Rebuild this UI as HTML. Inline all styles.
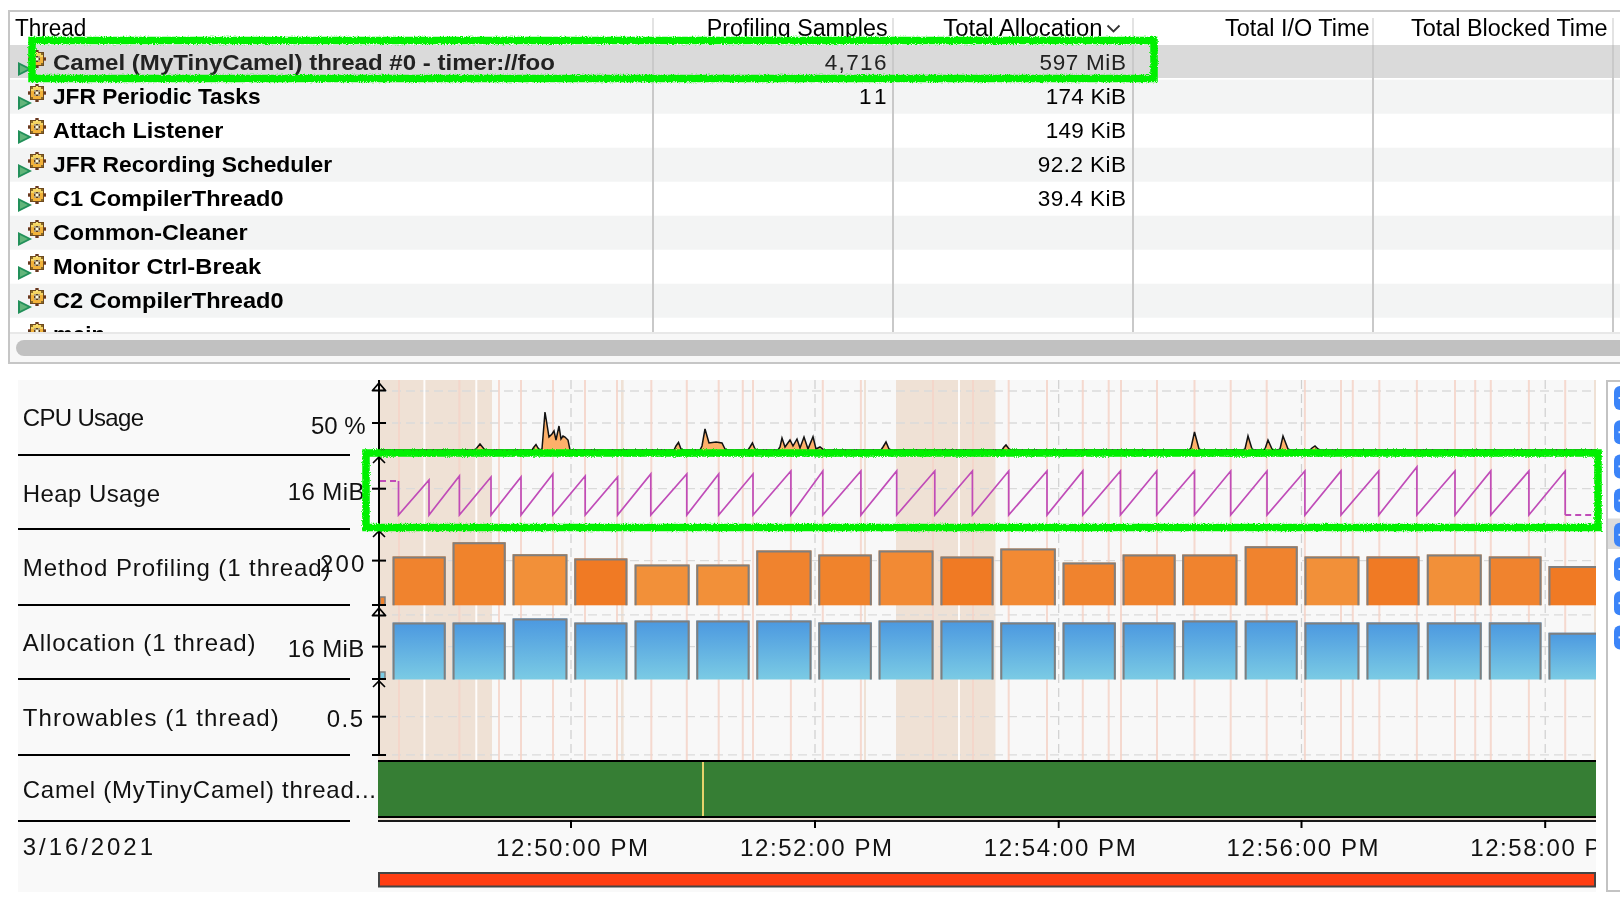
<!DOCTYPE html><html><head><meta charset="utf-8"><style>html,body{margin:0;padding:0;width:1620px;height:904px;overflow:hidden;background:#fff}</style></head><body><svg width="1620" height="904" viewBox="0 0 1620 904" style="position:absolute;left:0;top:0;will-change:transform;font-family:'Liberation Sans',sans-serif">
<rect x="0" y="0" width="1620" height="904" fill="#ffffff"/>
<rect x="9" y="11" width="1620" height="352" fill="#ffffff" stroke="#c6c6c6" stroke-width="2"/>
<rect x="10" y="45" width="1610" height="33" fill="#dadada"/>
<rect x="10" y="79.7" width="1610" height="34" fill="#f3f4f4"/>
<rect x="10" y="147.7" width="1610" height="34" fill="#f3f4f4"/>
<rect x="10" y="215.7" width="1610" height="34" fill="#f3f4f4"/>
<rect x="10" y="283.7" width="1610" height="34" fill="#f3f4f4"/>
<rect x="652" y="18" width="2" height="27" fill="#e3e3e3"/>
<rect x="652" y="45" width="2" height="287" fill="#c9c9c9"/>
<rect x="892" y="18" width="2" height="27" fill="#e3e3e3"/>
<rect x="892" y="45" width="2" height="287" fill="#c9c9c9"/>
<rect x="1132" y="18" width="2" height="27" fill="#e3e3e3"/>
<rect x="1132" y="45" width="2" height="287" fill="#c9c9c9"/>
<rect x="1372" y="18" width="2" height="27" fill="#e3e3e3"/>
<rect x="1372" y="45" width="2" height="287" fill="#c9c9c9"/>
<rect x="1612" y="18" width="2" height="27" fill="#e3e3e3"/>
<rect x="1612" y="45" width="2" height="287" fill="#c9c9c9"/>
<text x="15.0" y="36.0" font-size="23" font-weight="normal" fill="#000" textLength="71.4" lengthAdjust="spacingAndGlyphs">Thread</text>
<text x="706.7" y="36.0" font-size="23" font-weight="normal" fill="#000" textLength="180.9" lengthAdjust="spacingAndGlyphs">Profiling Samples</text>
<text x="943.2" y="36.0" font-size="23" font-weight="normal" fill="#000" textLength="159.3" lengthAdjust="spacingAndGlyphs">Total Allocation</text>
<polyline points="1107.5,25.5 1113.5,31.5 1119.5,25.5" fill="none" stroke="#333" stroke-width="1.8"/>
<text x="1225.0" y="36.0" font-size="23" font-weight="normal" fill="#000" textLength="144.4" lengthAdjust="spacingAndGlyphs">Total I/O Time</text>
<text x="1411.0" y="36.0" font-size="23" font-weight="normal" fill="#000" textLength="196.6" lengthAdjust="spacingAndGlyphs">Total Blocked Time</text>
<defs>
<clipPath id="tblclip"><rect x="10" y="12" width="1610" height="320"/></clipPath>
<g id="gear">
<path d="M7 0h4v2h-4z M0 7h2v4h-2z M16 7h2v4h-2z M7 16h4v2h-4z" fill="#a5705c"/>
<path d="M8 0h2v2h-2z M0 8h2v2h-2z M16 8h2v2h-2z M8 16h2v2h-2z" fill="#5e3a22"/>
<rect x="2" y="2" width="14" height="14" fill="#6e4a1e"/>
<rect x="3" y="3" width="12" height="12" fill="#f2b23a"/>
<path d="M3 3h12v4h-12z" fill="#f5d462"/>
<path d="M8 2h2v2h-2z" fill="#f7e27a"/>
<path d="M3 3h2v2h-2z M13 3h2v2h-2z M3 13h2v2h-2z M13 13h2v2h-2z" fill="#8a6a2a"/>
<rect x="6" y="6" width="6" height="6" fill="#b0a27e"/>
<path d="M8 6h2v1h-2z M6 8h1v2h-1z M11 8h1v2h-1z M8 11h2v1h-2z" fill="#5a3a20"/>
<rect x="8" y="8" width="2" height="2" fill="#fffbe8"/>
</g>
<g id="tri">
<path d="M0 0 L14 7 L0 14 Z" fill="#22905a"/>
<path d="M2 3 L10 7 L2 11 Z" fill="#62b57a"/>
</g>
<linearGradient id="blue" x1="0" y1="0" x2="0" y2="1"><stop offset="0" stop-color="#4b98e0"/><stop offset="1" stop-color="#7bcbe4"/></linearGradient>
</defs>
<g clip-path="url(#tblclip)">
<use href="#tri" x="18" y="62.0"/>
<use href="#gear" x="28" y="50.0"/>
<text x="53.0" y="70.0" font-size="22" font-weight="bold" fill="#222" textLength="502.0" lengthAdjust="spacingAndGlyphs">Camel (MyTinyCamel) thread #0 - timer://foo</text>
<text x="824.7" y="70.0" font-size="22.5" font-weight="normal" fill="#222" textLength="61.7" lengthAdjust="spacing">4,716</text>
<text x="1039.5" y="70.0" font-size="22.5" font-weight="normal" fill="#222" textLength="86.5" lengthAdjust="spacing">597 MiB</text>
<use href="#tri" x="18" y="96.0"/>
<use href="#gear" x="28" y="84.0"/>
<text x="53.0" y="104.0" font-size="22" font-weight="bold" fill="#000" textLength="207.5" lengthAdjust="spacingAndGlyphs">JFR Periodic Tasks</text>
<text x="859.0" y="104.0" font-size="22.5" font-weight="normal" fill="#000" textLength="27.4" lengthAdjust="spacing">11</text>
<text x="1045.7" y="104.0" font-size="22.5" font-weight="normal" fill="#000" textLength="80.3" lengthAdjust="spacing">174 KiB</text>
<use href="#tri" x="18" y="130.0"/>
<use href="#gear" x="28" y="118.0"/>
<text x="53.0" y="138.0" font-size="22" font-weight="bold" fill="#000" textLength="170.5" lengthAdjust="spacingAndGlyphs">Attach Listener</text>
<text x="1045.7" y="138.0" font-size="22.5" font-weight="normal" fill="#000" textLength="80.3" lengthAdjust="spacing">149 KiB</text>
<use href="#tri" x="18" y="164.0"/>
<use href="#gear" x="28" y="152.0"/>
<text x="53.0" y="172.0" font-size="22" font-weight="bold" fill="#000" textLength="279.2" lengthAdjust="spacingAndGlyphs">JFR Recording Scheduler</text>
<text x="1037.8" y="172.0" font-size="22.5" font-weight="normal" fill="#000" textLength="88.2" lengthAdjust="spacing">92.2 KiB</text>
<use href="#tri" x="18" y="198.0"/>
<use href="#gear" x="28" y="186.0"/>
<text x="53.0" y="206.0" font-size="22" font-weight="bold" fill="#000" textLength="230.5" lengthAdjust="spacingAndGlyphs">C1 CompilerThread0</text>
<text x="1037.8" y="206.0" font-size="22.5" font-weight="normal" fill="#000" textLength="88.2" lengthAdjust="spacing">39.4 KiB</text>
<use href="#tri" x="18" y="232.0"/>
<use href="#gear" x="28" y="220.0"/>
<text x="53.0" y="240.0" font-size="22" font-weight="bold" fill="#000" textLength="194.7" lengthAdjust="spacingAndGlyphs">Common-Cleaner</text>
<use href="#tri" x="18" y="266.0"/>
<use href="#gear" x="28" y="254.0"/>
<text x="53.0" y="274.0" font-size="22" font-weight="bold" fill="#000" textLength="208.2" lengthAdjust="spacingAndGlyphs">Monitor Ctrl-Break</text>
<use href="#tri" x="18" y="300.0"/>
<use href="#gear" x="28" y="288.0"/>
<text x="53.0" y="308.0" font-size="22" font-weight="bold" fill="#000" textLength="230.5" lengthAdjust="spacingAndGlyphs">C2 CompilerThread0</text>
<use href="#tri" x="18" y="334.0"/>
<use href="#gear" x="28" y="322.0"/>
<text x="53.0" y="342.0" font-size="22" font-weight="bold" fill="#000" textLength="52.0" lengthAdjust="spacingAndGlyphs">main</text>
</g>
<rect x="10" y="332" width="1610" height="2" fill="#e8e8e8"/>
<rect x="10" y="334" width="1610" height="28" fill="#f7f7f7"/>
<rect x="16" y="340" width="1620" height="16" rx="8" fill="#c1c1c1"/>
<rect x="18" y="380" width="1578" height="512" fill="#f9f9f9"/>
<rect x="380" y="380" width="1216" height="440" fill="#f8f8f8"/>
<rect x="378" y="380" width="114" height="440" fill="#efe1d5"/>
<rect x="896" y="380" width="99.5" height="440" fill="#efe1d5"/>
<rect x="621" y="380" width="2.6000000000000227" height="440" fill="#efe1d5"/>
<rect x="864" y="380" width="2" height="440" fill="#efe1d5"/>
<rect x="1594" y="380" width="2" height="440" fill="#efe1d5"/>
<line x1="571" y1="380" x2="571" y2="820" stroke="#cfcfcf" stroke-width="1.2" stroke-dasharray="9,5"/>
<line x1="815" y1="380" x2="815" y2="820" stroke="#cfcfcf" stroke-width="1.2" stroke-dasharray="9,5"/>
<line x1="1058.7" y1="380" x2="1058.7" y2="820" stroke="#cfcfcf" stroke-width="1.2" stroke-dasharray="9,5"/>
<line x1="1301.5" y1="380" x2="1301.5" y2="820" stroke="#cfcfcf" stroke-width="1.2" stroke-dasharray="9,5"/>
<line x1="1545.2" y1="380" x2="1545.2" y2="820" stroke="#cfcfcf" stroke-width="1.2" stroke-dasharray="9,5"/>
<line x1="378" y1="391" x2="1596" y2="391" stroke="#dadada" stroke-width="1.3" stroke-dasharray="9,5"/>
<line x1="378" y1="423" x2="1596" y2="423" stroke="#dadada" stroke-width="1.3" stroke-dasharray="9,5"/>
<line x1="378" y1="488.7" x2="1596" y2="488.7" stroke="#dadada" stroke-width="1.3" stroke-dasharray="9,5"/>
<line x1="378" y1="560.7" x2="1596" y2="560.7" stroke="#dadada" stroke-width="1.3" stroke-dasharray="9,5"/>
<line x1="378" y1="614.8" x2="1596" y2="614.8" stroke="#dadada" stroke-width="1.3" stroke-dasharray="9,5"/>
<line x1="378" y1="646.6" x2="1596" y2="646.6" stroke="#dadada" stroke-width="1.3" stroke-dasharray="9,5"/>
<line x1="378" y1="716.7" x2="1596" y2="716.7" stroke="#dadada" stroke-width="1.3" stroke-dasharray="9,5"/>
<line x1="378" y1="754.8" x2="1596" y2="754.8" stroke="#dadada" stroke-width="1.3" stroke-dasharray="9,5"/>
<rect x="398" y="380" width="2" height="440" fill="#f4d3c8" opacity="0.85"/>
<rect x="458.4" y="380" width="2" height="440" fill="#f4d3c8" opacity="0.85"/>
<rect x="498" y="380" width="2" height="440" fill="#f4d3c8" opacity="0.85"/>
<rect x="520" y="380" width="2" height="440" fill="#f4d3c8" opacity="0.85"/>
<rect x="552" y="380" width="2" height="440" fill="#f4d3c8" opacity="0.85"/>
<rect x="584" y="380" width="2" height="440" fill="#f4d3c8" opacity="0.85"/>
<rect x="616" y="380" width="2" height="440" fill="#f4d3c8" opacity="0.85"/>
<rect x="650.3" y="380" width="2" height="440" fill="#f4d3c8" opacity="0.85"/>
<rect x="685.8" y="380" width="2" height="440" fill="#f4d3c8" opacity="0.85"/>
<rect x="717.7" y="380" width="2" height="440" fill="#f4d3c8" opacity="0.85"/>
<rect x="741.8" y="380" width="2" height="440" fill="#f4d3c8" opacity="0.85"/>
<rect x="752" y="380" width="2" height="440" fill="#f4d3c8" opacity="0.85"/>
<rect x="789.9" y="380" width="2" height="440" fill="#f4d3c8" opacity="0.85"/>
<rect x="821.8" y="380" width="2" height="440" fill="#f4d3c8" opacity="0.85"/>
<rect x="859.9" y="380" width="2" height="440" fill="#f4d3c8" opacity="0.85"/>
<rect x="932" y="380" width="2" height="440" fill="#f4d3c8" opacity="0.85"/>
<rect x="972" y="380" width="2" height="440" fill="#f4d3c8" opacity="0.85"/>
<rect x="1007.7" y="380" width="2" height="440" fill="#f4d3c8" opacity="0.85"/>
<rect x="1046" y="380" width="2" height="440" fill="#f4d3c8" opacity="0.85"/>
<rect x="1081.8" y="380" width="2" height="440" fill="#f4d3c8" opacity="0.85"/>
<rect x="1107.7" y="380" width="2" height="440" fill="#f4d3c8" opacity="0.85"/>
<rect x="1120" y="380" width="2" height="440" fill="#f4d3c8" opacity="0.85"/>
<rect x="1156" y="380" width="2" height="440" fill="#f4d3c8" opacity="0.85"/>
<rect x="1193.5" y="380" width="2" height="440" fill="#f4d3c8" opacity="0.85"/>
<rect x="1229.7" y="380" width="2" height="440" fill="#f4d3c8" opacity="0.85"/>
<rect x="1265.7" y="380" width="2" height="440" fill="#f4d3c8" opacity="0.85"/>
<rect x="1303.9" y="380" width="2" height="440" fill="#f4d3c8" opacity="0.85"/>
<rect x="1340" y="380" width="2" height="440" fill="#f4d3c8" opacity="0.85"/>
<rect x="1351.8" y="380" width="2" height="440" fill="#f4d3c8" opacity="0.85"/>
<rect x="1378.3" y="380" width="2" height="440" fill="#f4d3c8" opacity="0.85"/>
<rect x="1415.9" y="380" width="2" height="440" fill="#f4d3c8" opacity="0.85"/>
<rect x="1454" y="380" width="2" height="440" fill="#f4d3c8" opacity="0.85"/>
<rect x="1474.2" y="380" width="2" height="440" fill="#f4d3c8" opacity="0.85"/>
<rect x="1489.8" y="380" width="2" height="440" fill="#f4d3c8" opacity="0.85"/>
<rect x="1527.9" y="380" width="2" height="440" fill="#f4d3c8" opacity="0.85"/>
<rect x="1564.2" y="380" width="2" height="440" fill="#f4d3c8" opacity="0.85"/>
<rect x="423.4" y="380" width="2" height="440" fill="#ffffff" opacity="0.9"/>
<rect x="475.3" y="380" width="2" height="440" fill="#ffffff" opacity="0.9"/>
<rect x="958" y="380" width="2" height="440" fill="#ffffff" opacity="0.9"/>
<polygon points="380,452 380,450 474,450 476,449 480,444 484,449 486,450 532,450 534,447 536,444.5 538,448 540,450 540,450 542,449 545,412 549,437 552,434 554,431 556,440 559,426 561,439 563,436 565,437 568,440 570,450 572,450 674,450 676,446 678.5,442.4 681,449 683,450 700,450 702,446 705,429 709,443 716,442 722,443 725,449 727,450 748,450 750,447 752.4,443 755,449 757,450 778,450 780,447 782,438 785,447 790,440 793,446 797,439 800,448 804,437 808,449 813,436.7 816,449 820,447 824,450 826,450 881,450 883,447 886,442 889,449 891,450 1002,450 1004,447 1006,445 1009,449 1011,450 1189,450 1191,448 1194.5,432 1199,449 1201,450 1243,450 1245,449 1248,436 1252,449 1254,450 1263,450 1265,449 1268,440 1272,449 1274,450 1278,450 1280,449 1283,436 1288,449 1290,450 1310,450 1312,448 1315,446 1318,449 1320,450 1596,450 1596,452" fill="#fdb06a" stroke="#111" stroke-width="1.5" stroke-linejoin="miter"/>
<line x1="380" y1="481" x2="398.5" y2="481" stroke="#c04cb8" stroke-width="2" stroke-dasharray="6,4"/>
<polyline points="398.5,481 398.5,515 429,480 429,515 459.4,476 459.4,515 491,477 491,515 521,477 521,515 552.8,474 552.8,515 585.2,476 585.2,515 617.6,477 617.6,515 650.8,474 650.8,515 686.8,474 686.8,515 718.7,474 718.7,515 753,474 753,515 790.9,471 790.9,515 822.8,471 822.8,515 860.9,471 860.9,515 896.7,471 896.7,515 934.8,471 934.8,515 972.4,471 972.4,515 1008.7,471 1008.7,515 1047,471 1047,515 1082.8,471 1082.8,515 1120.4,471 1120.4,515 1156.7,471 1156.7,515 1194.5,471 1194.5,515 1230.7,471 1230.7,515 1267,471 1267,515 1304.9,471 1304.9,515 1341,471 1341,515 1378.7,471 1378.7,515 1416.9,467 1416.9,515 1455,471 1455,515 1490.8,471 1490.8,515 1528.9,471 1528.9,515 1565.2,471 1565.2,515" fill="none" stroke="#c04cb8" stroke-width="1.7"/>
<line x1="1565.2" y1="515" x2="1596" y2="515" stroke="#c04cb8" stroke-width="2" stroke-dasharray="6,4"/>
<clipPath id="chartclip"><rect x="380" y="380" width="1216" height="440"/></clipPath>
<g clip-path="url(#chartclip)">
<rect x="392.6" y="556.4" width="53.1" height="48.9" fill="#f0832e"/>
<path d="M393.6 605.3 V557.4 H444.7 V605.3" fill="none" stroke="#7f7f7f" stroke-width="2"/>
<rect x="392.6" y="622.6" width="53.1" height="56.9" fill="url(#blue)"/>
<path d="M393.6 679.5 V623.6 H444.7 V679.5" fill="none" stroke="#7f7f7f" stroke-width="2"/>
<rect x="452.6" y="542.3" width="53.1" height="63.0" fill="#f0832c"/>
<path d="M453.6 605.3 V543.3 H504.7 V605.3" fill="none" stroke="#7f7f7f" stroke-width="2"/>
<rect x="452.6" y="622.6" width="53.1" height="56.9" fill="url(#blue)"/>
<path d="M453.6 679.5 V623.6 H504.7 V679.5" fill="none" stroke="#7f7f7f" stroke-width="2"/>
<rect x="512.6" y="554.2" width="54.8" height="51.1" fill="#f29039"/>
<path d="M513.6 605.3 V555.2 H566.4 V605.3" fill="none" stroke="#7f7f7f" stroke-width="2"/>
<rect x="512.6" y="618.4" width="54.8" height="61.1" fill="url(#blue)"/>
<path d="M513.6 679.5 V619.4 H566.4 V679.5" fill="none" stroke="#7f7f7f" stroke-width="2"/>
<rect x="574.3" y="558.4" width="53.1" height="46.9" fill="#f07a24"/>
<path d="M575.3 605.3 V559.4 H626.4 V605.3" fill="none" stroke="#7f7f7f" stroke-width="2"/>
<rect x="574.3" y="622.6" width="53.1" height="56.9" fill="url(#blue)"/>
<path d="M575.3 679.5 V623.6 H626.4 V679.5" fill="none" stroke="#7f7f7f" stroke-width="2"/>
<rect x="634.6" y="564.6" width="55.0" height="40.7" fill="#f29039"/>
<path d="M635.6 605.3 V565.6 H688.6 V605.3" fill="none" stroke="#7f7f7f" stroke-width="2"/>
<rect x="634.6" y="620.6" width="55.0" height="58.9" fill="url(#blue)"/>
<path d="M635.6 679.5 V621.6 H688.6 V679.5" fill="none" stroke="#7f7f7f" stroke-width="2"/>
<rect x="696.3" y="564.6" width="53.3" height="40.7" fill="#f29039"/>
<path d="M697.3 605.3 V565.6 H748.6 V605.3" fill="none" stroke="#7f7f7f" stroke-width="2"/>
<rect x="696.3" y="620.6" width="53.3" height="58.9" fill="url(#blue)"/>
<path d="M697.3 679.5 V621.6 H748.6 V679.5" fill="none" stroke="#7f7f7f" stroke-width="2"/>
<rect x="756.3" y="550.4" width="55.2" height="54.9" fill="#f0832e"/>
<path d="M757.3 605.3 V551.4 H810.5 V605.3" fill="none" stroke="#7f7f7f" stroke-width="2"/>
<rect x="756.3" y="620.5" width="55.2" height="59.0" fill="url(#blue)"/>
<path d="M757.3 679.5 V621.5 H810.5 V679.5" fill="none" stroke="#7f7f7f" stroke-width="2"/>
<rect x="818.3" y="554.5" width="53.5" height="50.8" fill="#f0832c"/>
<path d="M819.3 605.3 V555.5 H870.8 V605.3" fill="none" stroke="#7f7f7f" stroke-width="2"/>
<rect x="818.3" y="622.4" width="53.5" height="57.1" fill="url(#blue)"/>
<path d="M819.3 679.5 V623.4 H870.8 V679.5" fill="none" stroke="#7f7f7f" stroke-width="2"/>
<rect x="878.6" y="550.4" width="54.9" height="54.9" fill="#f28a34"/>
<path d="M879.6 605.3 V551.4 H932.5 V605.3" fill="none" stroke="#7f7f7f" stroke-width="2"/>
<rect x="878.6" y="620.5" width="54.9" height="59.0" fill="url(#blue)"/>
<path d="M879.6 679.5 V621.5 H932.5 V679.5" fill="none" stroke="#7f7f7f" stroke-width="2"/>
<rect x="940.5" y="556.6" width="53.0" height="48.7" fill="#f07a24"/>
<path d="M941.5 605.3 V557.6 H992.5 V605.3" fill="none" stroke="#7f7f7f" stroke-width="2"/>
<rect x="940.5" y="620.5" width="53.0" height="59.0" fill="url(#blue)"/>
<path d="M941.5 679.5 V621.5 H992.5 V679.5" fill="none" stroke="#7f7f7f" stroke-width="2"/>
<rect x="1000.3" y="548.5" width="55.5" height="56.8" fill="#f28a34"/>
<path d="M1001.3 605.3 V549.5 H1054.8 V605.3" fill="none" stroke="#7f7f7f" stroke-width="2"/>
<rect x="1000.3" y="622.4" width="55.5" height="57.1" fill="url(#blue)"/>
<path d="M1001.3 679.5 V623.4 H1054.8 V679.5" fill="none" stroke="#7f7f7f" stroke-width="2"/>
<rect x="1062.6" y="562.6" width="53.2" height="42.7" fill="#f0832e"/>
<path d="M1063.6 605.3 V563.6 H1114.8 V605.3" fill="none" stroke="#7f7f7f" stroke-width="2"/>
<rect x="1062.6" y="622.4" width="53.2" height="57.1" fill="url(#blue)"/>
<path d="M1063.6 679.5 V623.4 H1114.8 V679.5" fill="none" stroke="#7f7f7f" stroke-width="2"/>
<rect x="1122.6" y="554.5" width="53.0" height="50.8" fill="#f0832e"/>
<path d="M1123.6 605.3 V555.5 H1174.6 V605.3" fill="none" stroke="#7f7f7f" stroke-width="2"/>
<rect x="1122.6" y="622.4" width="53.0" height="57.1" fill="url(#blue)"/>
<path d="M1123.6 679.5 V623.4 H1174.6 V679.5" fill="none" stroke="#7f7f7f" stroke-width="2"/>
<rect x="1182.2" y="554.5" width="55.2" height="50.8" fill="#f0832e"/>
<path d="M1183.2 605.3 V555.5 H1236.4 V605.3" fill="none" stroke="#7f7f7f" stroke-width="2"/>
<rect x="1182.2" y="620.5" width="55.2" height="59.0" fill="url(#blue)"/>
<path d="M1183.2 679.5 V621.5 H1236.4 V679.5" fill="none" stroke="#7f7f7f" stroke-width="2"/>
<rect x="1244.7" y="546.3" width="53.0" height="59.0" fill="#f0832e"/>
<path d="M1245.7 605.3 V547.3 H1296.7 V605.3" fill="none" stroke="#7f7f7f" stroke-width="2"/>
<rect x="1244.7" y="620.5" width="53.0" height="59.0" fill="url(#blue)"/>
<path d="M1245.7 679.5 V621.5 H1296.7 V679.5" fill="none" stroke="#7f7f7f" stroke-width="2"/>
<rect x="1304.5" y="556.4" width="54.9" height="48.9" fill="#f29039"/>
<path d="M1305.5 605.3 V557.4 H1358.4 V605.3" fill="none" stroke="#7f7f7f" stroke-width="2"/>
<rect x="1304.5" y="622.4" width="54.9" height="57.1" fill="url(#blue)"/>
<path d="M1305.5 679.5 V623.4 H1358.4 V679.5" fill="none" stroke="#7f7f7f" stroke-width="2"/>
<rect x="1366.5" y="556.4" width="53.0" height="48.9" fill="#f07a24"/>
<path d="M1367.5 605.3 V557.4 H1418.5 V605.3" fill="none" stroke="#7f7f7f" stroke-width="2"/>
<rect x="1366.5" y="622.4" width="53.0" height="57.1" fill="url(#blue)"/>
<path d="M1367.5 679.5 V623.4 H1418.5 V679.5" fill="none" stroke="#7f7f7f" stroke-width="2"/>
<rect x="1426.8" y="554.5" width="54.9" height="50.8" fill="#f29039"/>
<path d="M1427.8 605.3 V555.5 H1480.7 V605.3" fill="none" stroke="#7f7f7f" stroke-width="2"/>
<rect x="1426.8" y="622.4" width="54.9" height="57.1" fill="url(#blue)"/>
<path d="M1427.8 679.5 V623.4 H1480.7 V679.5" fill="none" stroke="#7f7f7f" stroke-width="2"/>
<rect x="1488.8" y="556.4" width="52.7" height="48.9" fill="#f0832e"/>
<path d="M1489.8 605.3 V557.4 H1540.5 V605.3" fill="none" stroke="#7f7f7f" stroke-width="2"/>
<rect x="1488.8" y="622.4" width="52.7" height="57.1" fill="url(#blue)"/>
<path d="M1489.8 679.5 V623.4 H1540.5 V679.5" fill="none" stroke="#7f7f7f" stroke-width="2"/>
<rect x="1548.5" y="566.1" width="60.0" height="39.2" fill="#f07a24"/>
<path d="M1549.5 605.3 V567.1 H1607.5 V605.3" fill="none" stroke="#7f7f7f" stroke-width="2"/>
<rect x="1548.5" y="632.7" width="60.0" height="46.8" fill="url(#blue)"/>
<path d="M1549.5 679.5 V633.7 H1607.5 V679.5" fill="none" stroke="#7f7f7f" stroke-width="2"/>
</g>
<rect x="380" y="597" width="5" height="8" fill="#f0832e" stroke="#7f7f7f" stroke-width="1.5"/>
<rect x="380" y="672" width="5" height="7" fill="#7bcbe4" stroke="#7f7f7f" stroke-width="1.5"/>
<rect x="378" y="760" width="1218" height="58" fill="#367e34"/>
<rect x="378" y="760" width="1218" height="2" fill="#000"/>
<rect x="378" y="816" width="1218" height="2" fill="#000"/>
<rect x="702" y="762" width="2" height="54" fill="#e6d36c"/>
<rect x="378" y="818" width="1218" height="2" fill="#efe1d5"/>
<rect x="378" y="820" width="1218" height="2" fill="#1a1a1a"/>
<rect x="570" y="820" width="2" height="8" fill="#000"/>
<rect x="814" y="820" width="2" height="8" fill="#000"/>
<rect x="1057.7" y="820" width="2" height="8" fill="#000"/>
<rect x="1300.5" y="820" width="2" height="8" fill="#000"/>
<rect x="1544.2" y="820" width="2" height="8" fill="#000"/>
<rect x="378" y="380" width="2" height="75" fill="#000"/>
<path d="M379 383 L385.5 390.5 L372.5 390.5 Z" fill="none" stroke="#000" stroke-width="1.8" stroke-linejoin="round"/>
<rect x="372" y="422" width="14" height="2" fill="#000"/>
<rect x="378" y="455" width="2" height="74" fill="#000"/>
<path d="M373 463 L379 457 L385 463" fill="none" stroke="#000" stroke-width="1.6"/>
<rect x="372" y="487.7" width="14" height="2" fill="#000"/>
<rect x="378" y="529" width="2" height="76" fill="#000"/>
<path d="M373 537 L379 531 L385 537" fill="none" stroke="#000" stroke-width="1.6"/>
<rect x="372" y="559.6" width="14" height="2" fill="#000"/>
<rect x="372" y="604" width="14" height="2" fill="#000"/>
<rect x="378" y="605" width="2" height="74" fill="#000"/>
<path d="M379 608 L385.5 615.5 L372.5 615.5 Z" fill="none" stroke="#000" stroke-width="1.8" stroke-linejoin="round"/>
<rect x="372" y="645.6" width="14" height="2" fill="#000"/>
<rect x="372" y="678" width="14" height="2" fill="#000"/>
<rect x="378" y="679" width="2" height="76" fill="#000"/>
<path d="M373 687 L379 681 L385 687" fill="none" stroke="#000" stroke-width="1.6"/>
<rect x="372" y="715.7" width="14" height="2" fill="#000"/>
<rect x="372" y="754" width="14" height="2" fill="#000"/>
<rect x="18" y="454" width="332" height="2" fill="#000"/>
<rect x="18" y="528" width="332" height="2" fill="#000"/>
<rect x="18" y="604" width="332" height="2" fill="#000"/>
<rect x="18" y="678" width="332" height="2" fill="#000"/>
<rect x="18" y="754" width="332" height="2" fill="#000"/>
<rect x="18" y="820" width="332" height="2" fill="#000"/>
<text x="22.8" y="425.9" font-size="24" font-weight="normal" fill="#111" textLength="121.2" lengthAdjust="spacing">CPU Usage</text>
<text x="311.0" y="433.5" font-size="24" font-weight="normal" fill="#111" textLength="54.6" lengthAdjust="spacing">50 %</text>
<text x="22.8" y="502.0" font-size="24" font-weight="normal" fill="#111" textLength="137.2" lengthAdjust="spacing">Heap Usage</text>
<text x="287.8" y="499.6" font-size="24" font-weight="normal" fill="#111" textLength="76.7" lengthAdjust="spacing">16 MiB</text>
<text x="22.8" y="576.0" font-size="24" font-weight="normal" fill="#111" textLength="307.8" lengthAdjust="spacing">Method Profiling (1 thread)</text>
<text x="320.0" y="571.5" font-size="24" font-weight="normal" fill="#111" textLength="44.3" lengthAdjust="spacing">200</text>
<text x="22.8" y="651.3" font-size="24" font-weight="normal" fill="#111" textLength="232.6" lengthAdjust="spacing">Allocation (1 thread)</text>
<text x="287.8" y="657.0" font-size="24" font-weight="normal" fill="#111" textLength="76.5" lengthAdjust="spacing">16 MiB</text>
<text x="22.8" y="726.0" font-size="24" font-weight="normal" fill="#111" textLength="255.9" lengthAdjust="spacing">Throwables (1 thread)</text>
<text x="326.7" y="727.0" font-size="24" font-weight="normal" fill="#111" textLength="36.3" lengthAdjust="spacing">0.5</text>
<text x="22.8" y="798.0" font-size="24" font-weight="normal" fill="#111" textLength="353.2" lengthAdjust="spacing">Camel (MyTinyCamel) thread...</text>
<text x="22.8" y="855.0" font-size="24" font-weight="normal" fill="#111" textLength="130.2" lengthAdjust="spacing">3/16/2021</text>
<clipPath id="timeclip"><rect x="380" y="828" width="1216" height="40"/></clipPath>
<g clip-path="url(#timeclip)">
<text x="496.0" y="855.6" font-size="24" font-weight="normal" fill="#111" textLength="152.0" lengthAdjust="spacing">12:50:00 PM</text>
<text x="740.0" y="855.6" font-size="24" font-weight="normal" fill="#111" textLength="152.0" lengthAdjust="spacing">12:52:00 PM</text>
<text x="983.7" y="855.6" font-size="24" font-weight="normal" fill="#111" textLength="152.0" lengthAdjust="spacing">12:54:00 PM</text>
<text x="1226.5" y="855.6" font-size="24" font-weight="normal" fill="#111" textLength="152.0" lengthAdjust="spacing">12:56:00 PM</text>
<text x="1470.2" y="855.6" font-size="24" font-weight="normal" fill="#111" textLength="152.0" lengthAdjust="spacing">12:58:00 PM</text>
</g>
<rect x="379" y="873" width="1216" height="13.5" fill="#ff3d12" stroke="#444" stroke-width="2"/>
<rect x="1607" y="381" width="40" height="510" fill="#ffffff" stroke="#c3c3c3" stroke-width="2"/>
<rect x="1608" y="518.5" width="12" height="30.5" fill="#dcdcdc"/>
<rect x="1614" y="386.0" width="24" height="24" rx="6" fill="#3b84f8"/>
<rect x="1618.5" y="397.0" width="2" height="2" fill="#e8f0ff"/>
<rect x="1614" y="420.2" width="24" height="24" rx="6" fill="#3b84f8"/>
<rect x="1618.5" y="431.2" width="2" height="2" fill="#e8f0ff"/>
<rect x="1614" y="454.4" width="24" height="24" rx="6" fill="#3b84f8"/>
<rect x="1618.5" y="465.4" width="2" height="2" fill="#e8f0ff"/>
<rect x="1614" y="488.6" width="24" height="24" rx="6" fill="#3b84f8"/>
<rect x="1618.5" y="499.6" width="2" height="2" fill="#e8f0ff"/>
<rect x="1614" y="522.8" width="24" height="24" rx="6" fill="#3b84f8"/>
<rect x="1618.5" y="533.8" width="2" height="2" fill="#e8f0ff"/>
<rect x="1614" y="557.0" width="24" height="24" rx="6" fill="#3b84f8"/>
<rect x="1618.5" y="568.0" width="2" height="2" fill="#e8f0ff"/>
<rect x="1614" y="591.2" width="24" height="24" rx="6" fill="#3b84f8"/>
<rect x="1618.5" y="602.2" width="2" height="2" fill="#e8f0ff"/>
<rect x="1614" y="625.4" width="24" height="24" rx="6" fill="#3b84f8"/>
<rect x="1618.5" y="636.4" width="2" height="2" fill="#e8f0ff"/>
<filter id="rough" x="-2%" y="-20%" width="104%" height="140%"><feTurbulence type="fractalNoise" baseFrequency="0.9" numOctaves="2" seed="3"/><feDisplacementMap in="SourceGraphic" scale="3.5"/></filter>
<g filter="url(#rough)">
<rect x="32" y="40.5" width="1122" height="38" fill="none" stroke="#03f003" stroke-width="7.5"/>
<rect x="366" y="453" width="1232" height="74.5" fill="none" stroke="#03f003" stroke-width="7.5"/>
</g>
</svg></body></html>
